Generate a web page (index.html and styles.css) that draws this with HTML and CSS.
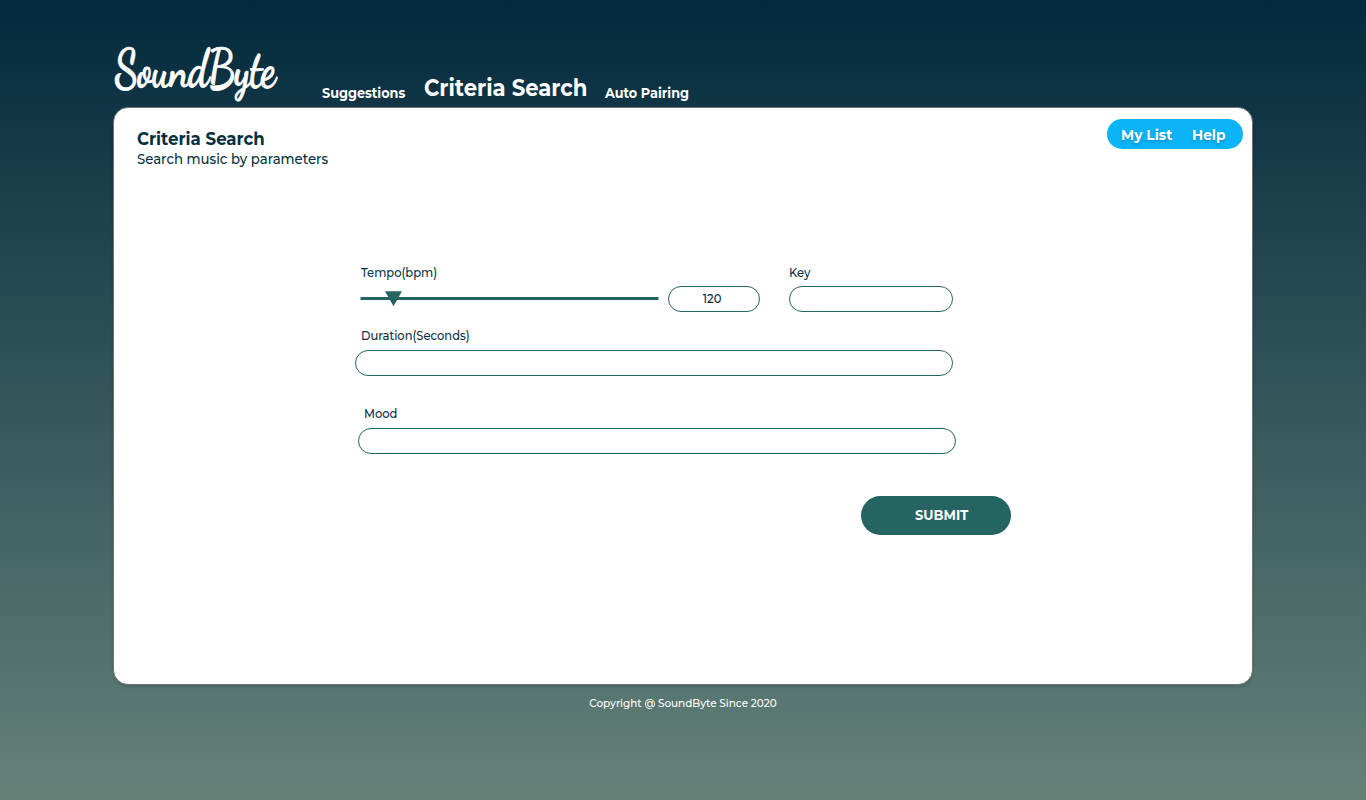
FILE: index.html
```html
<!DOCTYPE html>
<html lang="en">
<head>
<meta charset="utf-8">
<title>SoundByte</title>
<link rel="stylesheet" href="styles.css">
</head>
<body>
<header class="header">
  <a class="logo"><span class="logo-text">SoundByte</span></a>
  <nav class="nav">
    <a class="nav-link suggestions">Suggestions</a>
    <a class="nav-link active">Criteria Search</a>
    <a class="nav-link pairing">Auto Pairing</a>
  </nav>
</header>
<main class="panel">
  <div class="panel-head">
    <div>
      <h1 class="title">Criteria Search</h1>
      <p class="subtitle">Search music by parameters</p>
    </div>
    <div class="actions"><a class="my-list">My List</a><a class="help">Help</a></div>
  </div>
  <form class="form">
    <div class="row">
      <div class="tempo">
        <label class="label tempo-label">Tempo(bpm)</label>
        <div class="tempo-controls">
          <svg class="slider" width="300" height="26" viewBox="0 0 300 26">
            <path d="M.5 12.5H298.5" stroke="#256462" stroke-width="3"/>
            <path d="M25 5.3H42L33.5 20.3Z" fill="#256462"/>
          </svg>
          <div class="field bpm"><span class="bpm-value">120</span></div>
        </div>
      </div>
      <div class="key">
        <label class="label key-label">Key</label>
        <div class="field"></div>
      </div>
    </div>
    <div class="duration">
      <label class="label duration-label">Duration(Seconds)</label>
      <div class="field"></div>
    </div>
    <div class="mood">
      <label class="label mood-label">Mood</label>
      <div class="field"></div>
    </div>
    <button class="submit" type="button"><span class="submit-text">SUBMIT</span></button>
  </form>
</main>
<footer class="footer">Copyright @ SoundByte Since 2020</footer>
</body>
</html>
```

FILE: styles.css
```css
* { box-sizing: border-box; }
body {
  margin: 0;
  height: 800px;
  overflow: hidden;
  padding: 0 113px;
  font-family: Montserrat, Inter, sans-serif;
  color: #04303f;
  background: linear-gradient(#03293d, #658279);
}
.header { display: flex; height: 107px; color: #fff; }
.logo { width: 209px; padding: 38px 0 0 1px; }
.logo-text {
  display: block;
  width: max-content;
  font: 700 54px/62px "Dancing Script", "Liberation Serif", cursive;
  letter-spacing: -1px;
  -webkit-text-stroke: .8px #fff;
  transform: scaleX(.77) skewX(5deg);
  transform-origin: 0 50%;
}
.nav { display: flex; align-items: baseline; padding-top: 73px; }
.nav-link { font-size: 14px; font-weight: 700; line-height: 30px; white-space: nowrap; transform: scaleX(.915); transform-origin: 0 50%; }
.suggestions, .pairing { position: relative; top: 2px; }
.suggestions { width: 102px; }
.active { width: 181px; font-size: 23.5px; transform: scaleX(.903); }
.panel {
  height: 578px;
  border: 1px solid #707070;
  border-radius: 15px;
  background: #fff;
  box-shadow: 0 2px 3px rgba(0, 0, 0, .16);
}
.panel-head { display: flex; justify-content: space-between; padding: 11px 9px 0 23px; height: 157px; }
.title, .subtitle { transform: scaleX(.922); transform-origin: 0 50%; }
.title { margin: 8px 0 0; font-size: 18px; font-weight: 700; line-height: 24px; }
.subtitle { margin: 0; font-size: 14px; font-weight: 500; line-height: 17px; transform: scaleX(.948); }
.actions {
  display: flex;
  width: 136px;
  height: 30px;
  padding-left: 14px;
  border-radius: 15px;
  background: #0ab4f7;
  color: #fff;
  font-size: 15px;
  font-weight: 700;
  line-height: 31px;
  text-shadow: 0 2px 3px rgba(0, 0, 0, .18);
}
.my-list, .help { transform: scaleX(.92); transform-origin: 0 50%; white-space: nowrap; }
.my-list { width: 71px; }
.form { width: 656px; margin-left: 241px; }
.row { display: flex; justify-content: space-between; width: 598px; height: 64px; }
.label {
  display: block;
  width: max-content;
  height: 21px;
  font-size: 12.5px;
  font-weight: 500;
  line-height: 15px;
  white-space: nowrap;
  transform: scaleX(.92);
  transform-origin: 0 50%;
}
.field { height: 26px; border: 1px solid #256462; border-radius: 13px; background: #fff; }
.tempo { width: 405px; }
.tempo-label, .duration-label, .mood-label { margin-left: 6px; }
.duration-label, .mood-label { line-height: 13px; }
.tempo-controls { display: flex; gap: 8px; padding-left: 5px; }
.slider { flex: none; }
.bpm { width: 92px; padding-right: 4px; text-align: center; font-size: 12.5px; font-weight: 500; line-height: 23px; }
.bpm-value { display: inline-block; transform: scaleX(.92); }
.key { width: 164px; }
.duration { width: 598px; height: 78px; }
.mood { width: 598px; margin-left: 3px; height: 89px; }
.submit {
  display: block;
  width: 150px;
  height: 39px;
  margin: 0 0 0 auto;
  padding: 0 0 1px 11px;
  border: 0;
  border-radius: 20px;
  background: #256462;
  color: #fff;
  font: 700 14px/38px Montserrat, Inter, sans-serif;
}
.submit-text { display: inline-block; transform: scaleX(.93); }
.footer { padding-top: 11px; text-align: center; color: #fff; font-size: 11px; font-weight: 500; line-height: 15px; transform: scaleX(.947); }
```
